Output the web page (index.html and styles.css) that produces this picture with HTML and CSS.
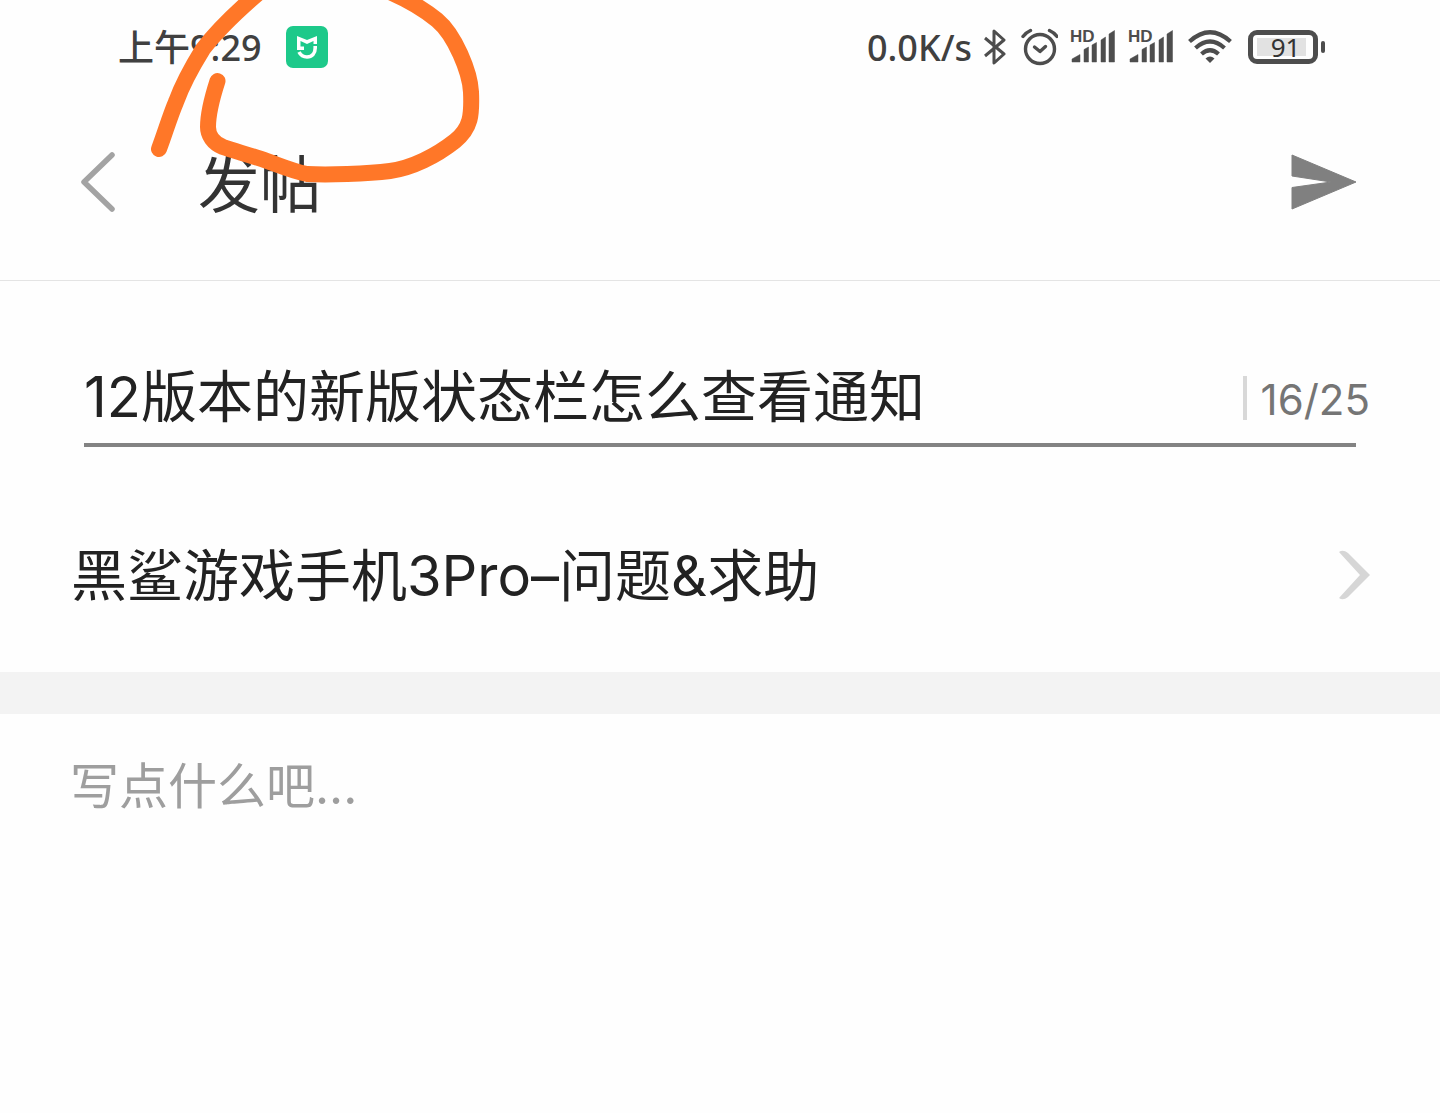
FILE: index.html
```html
<!DOCTYPE html>
<html lang="zh-CN">

<head>
  <meta charset="UTF-8">
  <meta name="viewport" content="width=device-width, initial-scale=1.0">
  <title>发帖</title>
  <link rel="stylesheet" href="styles.css">
</head>

<body>
  <div class="status-bar">
    <span class="status-text">上午9:29</span>
    <svg class="app-icon" width="42" height="42" viewBox="0 0 42 42">
      <rect width="42" height="42" rx="7" fill="#1dc98a"/>
      <path d="M11 10L21 14L31 10V18H27.500V15L21 18L14.500 15V20.500H18V24H11Z" fill="#fff"/>
      <path d="M29.200 20V22C29.200 27.500 26 31 21 31C17 31 14.500 29 13 26" fill="none" stroke="#fff" stroke-width="3.600"/>
    </svg>
    <div class="status-right">
      <span class="status-text">0.0K/s</span>
      <svg width="22" height="38" viewBox="0 0 22 38">
        <path d="M1 10L20 26L10 35V3L20 12L1 28" fill="none" stroke="#4d4d4d" stroke-width="3" stroke-linejoin="round"/>
      </svg>
      <svg width="40" height="38" viewBox="0 0 40 38" fill="none" stroke="#4d4d4d" stroke-width="3.400" stroke-linecap="round">
        <circle cx="22" cy="21" r="14.500"/>
        <path d="M16.500 19L22 23.500L27.500 18.500" stroke-linejoin="round"/>
        <path d="M5 8.500Q8 4.500 12.500 2.500M39 8.500Q36 4.500 31.500 2.500"/>
      </svg>
      <svg width="46" height="38" viewBox="0 0 46 38" fill="#4d4d4d">
        <text class="hd" x="0" y="14">HD</text>
        <path d="M2 34V31L10 26.500V34ZM14 34V21.500L18.500 19V34ZM22 34V17L26.500 14.500V34ZM31 34V12L35.500 9V34ZM39 34V6L44.500 2.500V34Z" stroke="#4d4d4d" stroke-width="0.500" stroke-linejoin="round"/>
      </svg>
      <svg width="46" height="38" viewBox="0 0 46 38" fill="#4d4d4d">
        <text class="hd" x="0" y="14">HD</text>
        <path d="M2 34V31L10 26.500V34ZM14 34V21.500L18.500 19V34ZM22 34V17L26.500 14.500V34ZM31 34V12L35.500 9V34ZM39 34V6L44.500 2.500V34Z" stroke="#4d4d4d" stroke-width="0.500" stroke-linejoin="round"/>
      </svg>
      <svg width="48" height="38" viewBox="0 0 48 38" fill="none" stroke="#4d4d4d" stroke-width="4.200">
        <path d="M3.500 13.500Q24 -5 44.500 13.500M9.500 20Q24 7 38.500 20M15.500 26Q24 18.500 32.500 26"/>
        <path d="M19.500 30.500Q24 26.500 28.500 30.500L24 35Z" fill="#4d4d4d" stroke="none"/>
      </svg>
      <span class="battery"><span class="battery-level">91</span></span>
    </div>
  </div>

  <header class="header">
    <button class="icon-btn" aria-label="返回">
      <svg width="36" height="60" viewBox="0 0 36 60">
        <path d="M32 3L4 30L32 57" fill="none" stroke="#a3a3a3" stroke-width="5.500" stroke-linecap="round" stroke-linejoin="round"/>
      </svg>
    </button>
    <h1>发帖</h1>
    <button class="icon-btn send-btn" aria-label="发送">
      <svg width="66" height="56" viewBox="0 0 66 56">
        <path d="M1 1L65 28L1 55V33.500L40 28L1 22Z" fill="#808080" stroke="#808080" stroke-linejoin="round"/>
      </svg>
    </button>
  </header>

  <main>
    <div class="title-field">
      <input type="text" id="title" aria-label="标题" maxlength="25" value="12版本的新版状态栏怎么查看通知">
      <label class="counter" for="title">16/25</label>
    </div>

    <a class="board" href="#">
      <span>黑鲨游戏手机3Pro–问题&amp;求助</span>
      <svg width="34" height="52" viewBox="0 0 34 52">
        <path d="M2 3Q6 0 11 4L33 26L11 48Q6 52 2 49L23 26Z" fill="#d6d6d6"/>
      </svg>
    </a>

    <textarea class="content" aria-label="正文" placeholder="写点什么吧..."></textarea>
  </main>

  <!-- hand-drawn mark -->
  <svg class="mark" width="500" height="200" viewBox="0 0 500 200">
    <path d="M159 149C165 133 170 116 176 102C181 88 190 70 203 49C216 32 236 12 262 -10M380 -12C403 -3 421 7 437 20C455 35 470 72 471 92C472 115 471 128 455 141C436 156 412 168 390 171C367 174 327 175 307 174C292 171 281 166 267 161C250 155 234 151 223 147C213 143 208 135 208 127C208 112 212 98 217.500 81" fill="none" stroke="#ff7728" stroke-width="16" stroke-linecap="round" stroke-linejoin="round"/>
  </svg>
</body>

</html>
```
FILE: styles.css
```css
* {
  box-sizing: border-box;
}

body {
  display: flex;
  flex-direction: column;
  position: relative;
  min-height: 100vh;
  margin: 0;
  background-color: #fefefe;
  color: #222;
  font-family: Inter, "Noto Sans CJK SC", sans-serif;
}

svg {
  display: block;
  flex-shrink: 0;
}

input,
textarea,
button {
  padding: 0;
  border: none;
  outline: none;
  background-color: transparent;
  color: inherit;
  font-family: inherit;
}

.status-bar {
  display: flex;
  align-items: center;
  padding: 23px 112px 0 118px;
}

.status-text {
  padding-top: 2px;
  color: #404040;
  font-family: "Noto Sans", "Noto Sans CJK SC", sans-serif;
  font-size: 36px;
  font-weight: 500;
  line-height: 46px;
}

.app-icon {
  margin-left: 24px;
}

.status-right {
  display: flex;
  align-items: center;
  gap: 12px;
  margin-left: auto;
}

.hd {
  font-family: "Liberation Sans", sans-serif;
  font-size: 17px;
  font-weight: bold;
}

.battery {
  position: relative;
  width: 70px;
  height: 34px;
  margin: 0 10px 0 2px;
  padding: 3px 4px;
  border: 5px solid #4d4d4d;
  border-radius: 9px;
}

.battery::after {
  content: "";
  position: absolute;
  top: 6px;
  right: -12px;
  width: 4px;
  height: 12px;
  border-radius: 2px;
  background-color: #4d4d4d;
}

.battery-level {
  display: block;
  width: 49px;
  padding-left: 8px;
  background-color: #e2e2e2;
  color: #333;
  font-family: "Noto Sans", sans-serif;
  font-size: 26px;
  line-height: 18px;
  text-align: center;
}

.header {
  display: flex;
  align-items: center;
  padding: 69px 83px 56px 80px;
  border-bottom: 1px solid #e4e4e4;
}

.header h1 {
  margin: 0 0 0 82px;
  padding-top: 8px;
  color: #333;
  font-size: 62px;
  font-weight: normal;
  line-height: 76px;
}

.icon-btn {
  cursor: pointer;
}

.send-btn {
  margin-left: auto;
}

main {
  display: flex;
  flex: 1;
  flex-direction: column;
}

.title-field {
  display: flex;
  align-items: center;
  margin: 76px 84px 0;
  padding-bottom: 16px;
  border-bottom: 4px solid #838383;
}

.title-field input {
  flex: 1;
  min-width: 0;
  height: 70px;
  font-size: 56px;
}

.counter {
  margin: 12px -14px 0 0;
  padding: 4px 0 0 14px;
  border-left: 4px solid #d8d8d8;
  color: #757575;
  font-size: 42px;
  line-height: 40px;
}

.board {
  display: flex;
  align-items: center;
  justify-content: space-between;
  padding: 88px 69px 57px 71px;
  border-bottom: 42px solid #f3f3f3;
  color: inherit;
  font-size: 56px;
  line-height: 80px;
  text-decoration: none;
}

.board span {
  padding-top: 2px;
  line-height: 78px;
}

.content {
  flex: 1;
  padding: 38px 70px;
  font-size: 49px;
  line-height: 70px;
  resize: none;
}

.content::placeholder {
  color: #9e9e9e;
}

.mark {
  position: absolute;
  top: 0;
  left: 0;
  pointer-events: none;
}
```
